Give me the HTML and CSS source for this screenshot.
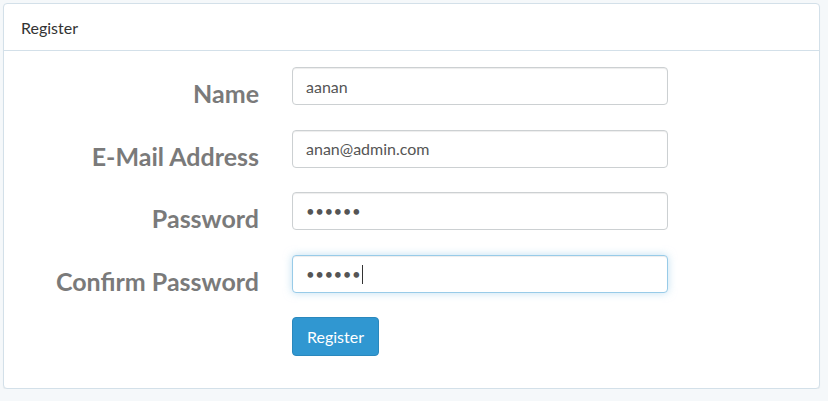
FILE: index.html
```html
<!DOCTYPE html>
<html lang="en">
<head>
<meta charset="utf-8">
<title>Register</title>
<link rel="stylesheet" href="styles.css">
</head>
<body>
<div class="panel">
  <div class="panel-heading">Register</div>
  <div class="panel-body">
    <form class="form">
      <div class="form-group">
        <label class="control-label" for="name">Name</label>
        <input id="name" class="form-control" type="text" value="aanan">
      </div>
      <div class="form-group">
        <label class="control-label" for="email">E-Mail Address</label>
        <input id="email" class="form-control" type="email" value="anan@admin.com">
      </div>
      <div class="form-group">
        <label class="control-label" for="password">Password</label>
        <input id="password" class="form-control" type="password" value="secret">
      </div>
      <div class="form-group">
        <label class="control-label" for="password-confirm">Confirm Password</label>
        <div class="field">
          <input id="password-confirm" class="form-control is-focused" type="password" value="secret">
          <span class="caret"></span>
        </div>
      </div>
      <div class="form-group actions">
        <button type="button" class="btn btn-primary">Register</button>
      </div>
    </form>
  </div>
</div>
</body>
</html>
```

FILE: styles.css
```css
* { box-sizing: border-box; }

html, body {
  margin: 0;
  background: #f5f8fa;
}

body {
  padding: 3px 8px 0 3px;
  font-family: Lato, "Open Sans", sans-serif;
  font-size: 16px;
  color: #636b6f;
}

.panel {
  background: #fff;
  border: 1px solid #d3e0e9;
  border-radius: 4px;
  box-shadow: 0 1px 1px rgba(0, 0, 0, 0.05);
  height: 386px;
}

.panel-heading {
  height: 47px;
  padding: 14px 17px 0;
  line-height: 19px;
  font-size: 16px;
  border-bottom: 1px solid #d3e0e9;
  color: #333;
}

.panel-body {
  padding: 16px 0 0;
}

.form-group {
  display: grid;
  grid-template-columns: 255px 376px;
  column-gap: 33px;
  align-items: start;
  height: 38px;
  margin-bottom: 24.5px;
}

.control-label {
  text-align: right;
  font-size: 25px;
  font-weight: 700;
  color: #7a7a7a;
  line-height: 28px;
  padding-top: 12px;
}

.field {
  position: relative;
}

.form-control {
  display: block;
  width: 100%;
  height: 38px;
  padding: 6px 13px;
  font-family: Lato, "Open Sans", sans-serif;
  font-size: 16px;
  color: #555;
  background: #fff;
  border: 1px solid #ccd0d2;
  border-radius: 4px;
  box-shadow: inset 0 1px 1px rgba(0, 0, 0, 0.075);
  outline: none;
}

.form-control[type="password"] {
  font-size: 15px;
  letter-spacing: 0.5px;
}

.form-control.is-focused,
.form-control:focus {
  border-color: #98cbe8;
  box-shadow: inset 0 1px 1px rgba(0, 0, 0, 0.075), 0 0 8px rgba(152, 203, 232, 0.6);
}

.caret {
  position: absolute;
  left: 70px;
  top: 10px;
  width: 1px;
  height: 19px;
  background: #333;
}

.actions {
  grid-template-columns: 255px auto;
  height: 39px;
}

.actions .btn {
  grid-column: 2;
  justify-self: start;
}

.btn {
  height: 39px;
  width: 87px;
  padding: 0;
  font-family: Lato, "Open Sans", sans-serif;
  font-size: 16px;
  color: #fff;
  background: #3097d1;
  border: 1px solid #2a88bd;
  border-radius: 4px;
  cursor: pointer;
}
```
